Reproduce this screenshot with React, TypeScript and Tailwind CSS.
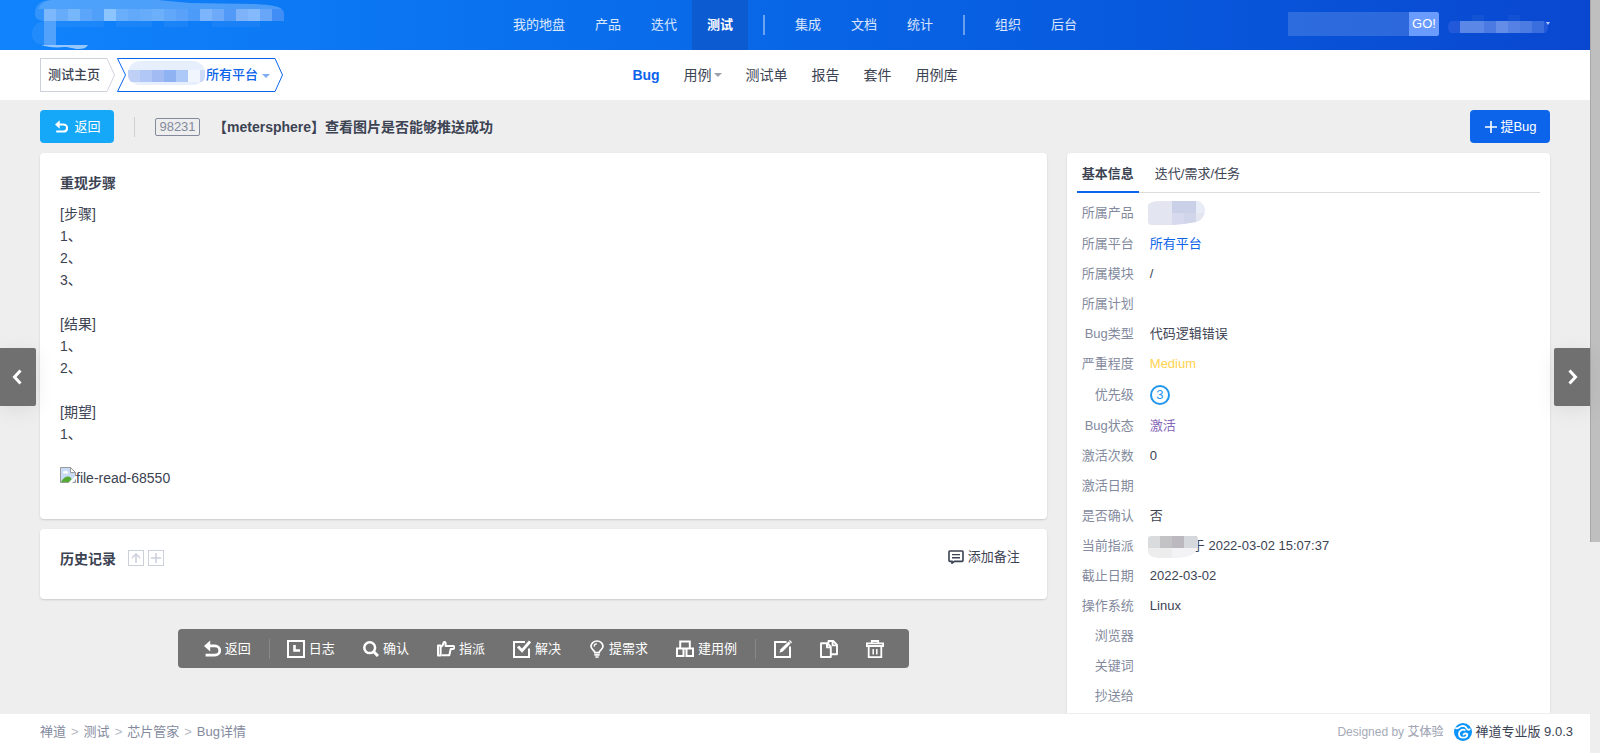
import React from "react";

type IconProps = { className?: string };

const primaryNav: string[][] = [
  ["我的地盘", "产品", "迭代", "测试"],
  ["集成", "文档", "统计"],
  ["组织", "后台"],
];

const subNav = ["Bug", "用例", "测试单", "报告", "套件", "用例库"];

const logoCells = [
  "#7db8fc", "#66acfb", "#76b7fc", "#5ba6fb", "#50a0fa", "#8cc5fd", "#68aefb", "#62a9fa", "#66acfa", "#6cb0fb",
  "#62a8fa", "#5aa2f9", "#4d9bf8", "#7cb5fb", "#6daaf9", "#519af7", "#7eb3fa", "#84b9fb", "#67a6f8", "#3f8df5",
];

const steps = ["[步骤]", "1、", "2、", "3、", "", "[结果]", "1、", "2、", "", "[期望]", "1、", ""];

function Caret({ className }: IconProps) {
  return (
    <svg viewBox="0 0 8 4" className={className} fill="currentColor" aria-hidden="true">
      <path d="M0 0h8L4 4z" />
    </svg>
  );
}

function BackIcon({ className }: IconProps) {
  return (
    <svg viewBox="0 0 16 16" className={className} fill="none" aria-hidden="true">
      <path d="M1.500 14.200h8.700c2.700 0 4.600-1.800 4.600-4.300s-1.900-4.300-4.600-4.300H4" stroke="currentColor" strokeWidth="2.600" />
      <path d="M0 5.600L5.800.4v10.400z" fill="currentColor" />
    </svg>
  );
}

function LogIcon({ className }: IconProps) {
  return (
    <svg viewBox="0 0 18 18" className={className} fill="none" stroke="currentColor" strokeWidth="2" aria-hidden="true">
      <path d="M1 1h16v16H1z" />
      <path d="M7.500 5v5.500H13" strokeWidth="2.600" />
    </svg>
  );
}

function SearchIcon({ className }: IconProps) {
  return (
    <svg viewBox="0 0 16 16" className={className} fill="none" stroke="currentColor" aria-hidden="true">
      <circle cx="6.700" cy="6.700" r="5.400" strokeWidth="2.500" />
      <path d="M10.500 10.500l4.500 4.500" strokeWidth="3" />
    </svg>
  );
}

function HandIcon({ className }: IconProps) {
  return (
    <svg viewBox="0 0 18 16" className={className} fill="none" stroke="currentColor" strokeWidth="2" strokeLinejoin="round" aria-hidden="true">
      <path d="M1 4.500h2.600v10H1z" />
      <path d="M4.500 14.200h7.800l1.400-6.200h2.600c1 0 1.300-3 0-3H8.600V2.200c0-1.400-2-1.500-2.200-.1C6.200 4 5.400 5 4 5.800" />
    </svg>
  );
}

function CheckIcon({ className }: IconProps) {
  return (
    <svg viewBox="0 0 18 18" className={className} fill="none" stroke="currentColor" strokeWidth="2" aria-hidden="true">
      <path d="M12 2H1v15h15V8.500" />
      <path d="M5 6.500l4 4.200L17 1.500" strokeWidth="2.800" />
    </svg>
  );
}

function BulbIcon({ className }: IconProps) {
  return (
    <svg viewBox="0 0 14 18" className={className} fill="none" stroke="currentColor" strokeWidth="1.700" strokeLinecap="round" aria-hidden="true">
      <path d="M4.800 12.600C4.600 10.400 1 9.500 1 6.200A6 5.200 0 0 1 13 6.200c0 3.300-3.600 4.200-3.800 6.400z" />
      <path d="M5 14.800h4M6 17h2" />
      <path d="M4.200 6.200c0-1.500 1-2.300 2.300-2.400" strokeWidth="1.200" />
    </svg>
  );
}

function CubesIcon({ className }: IconProps) {
  return (
    <svg viewBox="0 0 18 18" className={className} fill="none" stroke="currentColor" strokeWidth="2" aria-hidden="true">
      <path d="M4.200 8.500V1.500h9.600v7" />
      <path d="M1 8.500h6.500V16H1zM10.500 8.500H17V16h-6.500zM7.500 8.500h3" />
    </svg>
  );
}

function EditIcon({ className }: IconProps) {
  return (
    <svg viewBox="0 0 18 18" className={className} fill="none" stroke="currentColor" strokeWidth="2" aria-hidden="true">
      <path d="M12.500 2H1v15h15V6.500" />
      <path d="M5.500 12.800l1-3.600L14.600 1.600l2 2-7.800 8z" fill="currentColor" stroke="none" />
      <path d="M15.400.6L17.600 2.800" strokeWidth="1.400" />
    </svg>
  );
}

function CopyIcon({ className }: IconProps) {
  return (
    <svg viewBox="0 0 18 18" className={className} fill="none" stroke="currentColor" strokeWidth="1.900" strokeLinejoin="round" aria-hidden="true">
      <path d="M7.400 3.200H1V17h9.800V6.800z" />
      <path d="M7 3.600v3.800h3.600" />
      <path d="M8.500 3V1h4.700L17 4.800v9.400h-6" />
      <path d="M12.600 1.400v4h4" />
    </svg>
  );
}

function TrashIcon({ className }: IconProps) {
  return (
    <svg viewBox="0 0 18 18" className={className} fill="none" stroke="currentColor" strokeWidth="1.800" aria-hidden="true">
      <path d="M.9 6V3.400h16.200V6z" />
      <path d="M5.800 3.200V1h6.400v2.200" />
      <path d="M2.700 6v11.100h12.600V6" />
      <path d="M7.200 9v5.500M10.800 9v5.500" strokeWidth="1.500" />
    </svg>
  );
}

function CommentIcon({ className }: IconProps) {
  return (
    <svg viewBox="0 0 16 14" className={className} fill="none" stroke="currentColor" strokeWidth="1.600" aria-hidden="true">
      <path d="M1.800 1h12.400q.8 0 .8.800v8.800q0 .8-.8.800H6.500L4 13.200v-1.800H1.800q-.8 0-.8-.8V1.800Q1 1 1.800 1z" />
      <path d="M4 4.600h8M4 7.700h8" strokeWidth="1.400" />
    </svg>
  );
}

function BrokenImage({ className }: IconProps) {
  return (
    <svg viewBox="0 0 16 16" className={className} aria-hidden="true">
      <path d="M.5.5h10l5 5v10H.5z" fill="#c9dcf7" stroke="#9a9a9a" />
      <path d="M10.500.5v5h5z" fill="#fff" stroke="#9a9a9a" />
      <path d="M3 5.500c0-1 1-1.500 1.800-1 .5-1.200 2.400-1 2.500.4 1 0 1.200 1.100.5 1.600H3.500z" fill="#fff" />
      <path d="M1 15c1.500-3.500 4.500-5.500 7-5.500 2 0 3.500 1.500 3.500 3L9 15z" fill="#56ab35" />
      <path d="M8.500 16L16 8.500V12l-4 4z" fill="#fff" />
    </svg>
  );
}

function Brand() {
  return (
    <svg viewBox="0 0 260 50" className="h-[50px] w-[260px]" role="img" aria-label="logo">
      <defs>
        <clipPath id="brand-outline">
          <path d="M10 6C12 2 16 0 22 0H128L160 3L225 4C240 5 254 6 254 14V21H14V9C8 14 4 18 6 21z" />
        </clipPath>
      </defs>
      <path d="M5 14C5 3 12 0 22 0H128L160 3 225 4C242 5 254 6 254 14V21H12C8 20 5 18 5 14z" fill="#fff" fillOpacity=".14" />
      <path d="M8 9C11 3 16 0 22 0H128L160 3 225 4C240 5 248 6 252 9z" fill="#fff" fillOpacity=".14" />
      <path d="M14 21C5 23 2 28 2 34s3 10 12 11z" fill="#fff" fillOpacity=".08" />
      <g clipPath="url(#brand-outline)">
        {logoCells.map((fill, i) => (
          <rect key={i} x={14 + i * 12} y="9" width="12" height="12" fill={fill} />
        ))}
      </g>
      <path d="M26 21h48v6H26zM86 21h36v6H86zM134 21h24v6h-24zM182 21h48v6h-48z" fill="#fff" fillOpacity=".05" />
      <path d="M14 21h12v24H14z" fill="#52a2fb" />
      <path d="M11 45h47c-2 3-5 4-9 4-6 0-9-2-15-2-8 1-17 0-23-2z" fill="#93c7fd" />
    </svg>
  );
}

function UserMask() {
  return (
    <svg viewBox="0 0 104 26" className="mt-1.5 h-[26px] w-[104px]" role="img" aria-label="user">
      <path d="M3 7C1 8 0 10 0 13s1 5 3 6h94c2-1 3-3 3-6s-1-5-3-6z" fill="#2159da" />
      <path d="M12 7h24v12H12z" fill="#5b87e6" />
      <path d="M36 7h12v12H36z" fill="#4a7ae2" />
      <path d="M48 7h12v12H48z" fill="#648de7" />
      <path d="M60 7h12v12H60z" fill="#5581e4" />
      <path d="M72 7h12v12H72z" fill="#4c7be2" />
      <path d="M84 7h12v12H84z" fill="#3a6ddd" />
      <path d="M24 1h12v6H24zM60 1h12v6H60z" fill="#fff" fillOpacity=".04" />
      <path d="M98 8h4l-2 3z" fill="#b5c9f5" />
    </svg>
  );
}

function ProductMask() {
  return (
    <svg viewBox="0 0 78 24" className="mb-1 h-6 w-[78px]" role="img" aria-label="product">
      <rect width="77" height="24" rx="12" fill="#e8effc" />
      <path d="M0 9h12v12H3Q0 18 0 15z" fill="#bfd0f7" />
      <path d="M12 9h12v12H12z" fill="#b1c7f6" />
      <path d="M24 9h12v12H24z" fill="#a2bcf3" />
      <path d="M36 9h12v12H36z" fill="#8fb2f2" />
      <path d="M48 9h12v12H48z" fill="#adc9f7" />
      <path d="M60 9h12v12H60z" fill="#f0f5fe" />
      <path d="M72 9h5v6q0 4-3 6h-2z" fill="#cfdcf9" />
    </svg>
  );
}

function FieldMask() {
  return (
    <svg viewBox="0 0 57 26" className="h-[26px] w-[57px]" role="img" aria-label="product">
      <path d="M0 5Q3 1 12 1H50Q57 4 57 11 56 20 48 22L26 25H4Q0 25 0 21z" fill="#e3e5f1" />
      <path d="M24 1h24v12H24z" fill="#c9d0e8" />
      <path d="M24 13h12v11l-12 1z" fill="#d7daee" />
      <path d="M36 13h12v9l-12 2z" fill="#d0d5ea" />
      <path d="M48 1h2Q57 4 57 11v2h-9z" fill="#e8ecf7" />
    </svg>
  );
}

function AssigneeMask() {
  return (
    <svg viewBox="0 0 50 24" className="mt-0.5 h-6 w-[50px]" role="img" aria-label="assignee">
      <path d="M3 1h44q3 0 3 3v9H0V4q0-3 3-3z" fill="#dadbdd" />
      <path d="M12 1h12v12H12z" fill="#c3c2c5" />
      <path d="M24 1h12v12H24z" fill="#bcb8c0" />
      <path d="M36 1h13v12H36z" fill="#d5d9de" />
      <path d="M0 13h24v10H10Q0 22 0 16z" fill="#ededee" />
      <path d="M24 13h25q-1 6-8 8-6 2-17 2z" fill="#f3f3f6" />
    </svg>
  );
}

function ZenLogo({ className }: IconProps) {
  return (
    <svg viewBox="0 0 18 18" className={className} fill="none" stroke="#fff" strokeLinecap="round" aria-hidden="true">
      <circle cx="9" cy="9" r="9" fill="#0a94fb" stroke="none" />
      <path d="M2 5.200C4.400 6 5.600 3 8.600 2.900c2.200 0 3.400 1.100 4.300 2.700.6 1.100 1.800 1.300 2.900.7" strokeWidth="1.800" />
      <path d="M10.800 7C7.800 6 5 7.800 5 10.700c0 2.500 1.900 4 4.300 4 2.300 0 4-1.500 4-3.500-1.200-.8-3-.7-3.800.3" strokeWidth="1.800" />
    </svg>
  );
}

type Row = { label: string; value?: React.ReactNode; height?: string };

const rows: Row[] = [
  { label: "所属产品", value: <span className="-ml-0.5 block"><FieldMask /></span>, height: "h-8" },
  { label: "所属平台", value: <a href="#platform" className="text-[#0c64eb]">所有平台</a> },
  { label: "所属模块", value: "/" },
  { label: "所属计划" },
  { label: "Bug类型", value: "代码逻辑错误" },
  { label: "严重程度", value: <span className="text-[#ffd24d]">Medium</span> },
  {
    label: "优先级",
    value: (
      <span className="flex size-5 items-center justify-center rounded-full border-2 border-[#1f97ee] text-[#1f97ee]">3</span>
    ),
    height: "h-8",
  },
  { label: "Bug状态", value: <span className="text-[#8666b8]">激活</span> },
  { label: "激活次数", value: "0" },
  { label: "激活日期" },
  { label: "是否确认", value: "否" },
  {
    label: "当前指派",
    value: (
      <span className="-ml-0.5 flex items-center whitespace-pre">
        <span className="z-10"><AssigneeMask /></span>
        <span className="-ml-1.5">于 2022-03-02 15:07:37</span>
      </span>
    ),
  },
  { label: "截止日期", value: "2022-03-02" },
  { label: "操作系统", value: "Linux" },
  { label: "浏览器" },
  { label: "关键词" },
  { label: "抄送给" },
];

const actions = [
  { label: "日志", icon: <LogIcon className="size-[18px]" /> },
  { label: "确认", icon: <SearchIcon className="size-4" /> },
  { label: "指派", icon: <HandIcon className="h-4 w-[18px]" /> },
  { label: "解决", icon: <CheckIcon className="size-[18px]" /> },
  { label: "提需求", icon: <BulbIcon className="h-[18px] w-4" /> },
  { label: "建用例", icon: <CubesIcon className="size-[18px]" /> },
];

const iconActions = [
  { label: "编辑", icon: <EditIcon className="size-[18px]" /> },
  { label: "复制", icon: <CopyIcon className="size-[18px]" /> },
  { label: "删除", icon: <TrashIcon className="size-[18px]" /> },
];

function Header() {
  return (
    <header className="grid h-[50px] grid-cols-[1fr_auto_1fr] bg-linear-to-r from-[#1184fc] to-[#0a47d0] text-[13px]">
      <div className="pl-[30px]">
        <Brand />
      </div>
      <nav className="flex items-center">
        {primaryNav.map((group, g) => (
          <React.Fragment key={g}>
            {g > 0 && <span className="mx-[15px] h-5 w-0.5 bg-white/40" />}
            {group.map((item) => (
              <a
                key={item}
                href="#nav"
                className={
                  item === "测试"
                    ? "flex h-[50px] items-center bg-[#0d5bd0] px-[15px] font-bold text-white"
                    : "flex h-[50px] items-center px-[15px] text-white/85"
                }
              >
                {item}
              </a>
            ))}
          </React.Fragment>
        ))}
      </nav>
      <div className="flex h-12 items-center justify-end pr-[38px]">
        <input aria-label="搜索" className="h-6 w-[121px] bg-white/15 px-2 text-white outline-none" />
        <button className="mr-[9px] h-6 w-[30px] rounded-r-xs bg-[#6a9bff] text-[13px] font-medium text-white">GO!</button>
        <UserMask />
      </div>
    </header>
  );
}

function Breadcrumb() {
  return (
    <div className="flex items-center pl-10 text-[13px] font-medium">
      <a href="#home" className="flex h-[34px] items-center text-[#3c4353]">
        <span className="flex h-full items-center border-y border-l border-[#cbd0db] pr-[7px] pl-[7px]">测试主页</span>
        <svg viewBox="0 0 8 34" className="h-full w-2" fill="none" stroke="#d0d4de" aria-hidden="true">
          <path d="M0 .5L7.500 17 0 33.500" />
        </svg>
      </a>
      <a href="#product" className="ml-0.5 flex h-[34px] items-center text-[#0c64eb]">
        <svg viewBox="0 0 9 34" className="h-full w-[9px]" fill="none" stroke="#0c64eb" aria-hidden="true">
          <path d="M9 .5H.5L8.500 17 .5 33.500H9" />
        </svg>
        <span className="flex h-full items-center border-y border-[#0c64eb] pr-[5px] pl-0.5">
          <ProductMask />
          所有平台
          <Caret className="mt-0.5 ml-1 h-1 w-2 text-[#7fadf5]" />
        </span>
        <svg viewBox="0 0 8 34" className="h-full w-2" fill="none" stroke="#0c64eb" aria-hidden="true">
          <path d="M0 .5L7.500 17 0 33.500" />
        </svg>
      </a>
    </div>
  );
}

export default function App() {
  return (
    <div className="flex min-h-screen bg-[#eee] font-['Liberation_Sans','Noto_Sans_CJK_SC',sans-serif] text-[13px] text-[#3c4353]">
      <div className="relative flex min-w-0 grow flex-col">
        <Header />

        <div className="grid h-[50px] grid-cols-[1fr_auto_1fr] bg-white">
          <Breadcrumb />
          <nav className="flex items-center gap-6 text-sm">
            {subNav.map((item) => (
              <a
                key={item}
                href="#sub"
                className={item === "Bug" ? "font-bold text-[#0c64eb]" : "flex items-center text-[#3c4353]"}
              >
                {item}
                {item === "用例" && <Caret className="ml-0.5 h-1 w-2 text-[#9aa0ac]" />}
              </a>
            ))}
          </nav>
          <div />
        </div>

        <main className="flex grow flex-col px-10 pt-2.5">
          <div className="flex items-center">
            <button className="flex h-[33px] w-[74px] items-center justify-center gap-1.5 rounded-sm bg-[#16a8f8] pl-0.5 text-white">
              <BackIcon className="size-[13px]" />
              返回
            </button>
            <span className="ml-5 h-5 w-px bg-[#cfcfcf]" />
            <span className="ml-5 flex h-[18px] w-[45px] items-center justify-center rounded-xs border border-[#838a9d] text-[#838a9d]">
              98231
            </span>
            <h1 className="ml-[13px] text-sm font-bold">【metersphere】查看图片是否能够推送成功</h1>
            <button className="ml-auto flex h-[33px] w-20 items-center justify-center gap-[3px] rounded-sm bg-[#0c64eb] pl-0.5 text-white">
              <svg viewBox="0 0 12 12" className="size-3" stroke="currentColor" strokeWidth="1.600" aria-hidden="true">
                <path d="M0 6h12M6 0v12" />
              </svg>
              提Bug
            </button>
          </div>

          <div className="mt-2.5 flex grow gap-5">
            <div className="flex min-w-0 grow flex-col">
              <section className="rounded-sm bg-white px-5 pt-5 pb-[30px] text-sm shadow-[0_1px_2px_rgba(0,0,0,0.15)]">
                <h2 className="leading-5 font-bold">重现步骤</h2>
                <div className="mt-2.5 leading-[22px]">
                  {steps.map((line, i) => (
                    <p key={i} className="h-[22px]">{line}</p>
                  ))}
                  <p className="flex h-[22px]">
                    <BrokenImage className="size-4" />
                    file-read-68550
                  </p>
                </div>
              </section>

              <section className="mt-2.5 flex h-[70px] items-start rounded-sm bg-white px-5 pt-5 shadow-[0_1px_2px_rgba(0,0,0,0.15)]">
                <h2 className="text-sm leading-5 font-bold">历史记录</h2>
                <div className="mt-px ml-3 flex gap-1 text-[#cbd0db]">
                  <button aria-label="排序" className="flex size-4 items-center justify-center border border-current">
                    <svg viewBox="0 0 10 10" className="size-2.5" fill="none" stroke="currentColor" strokeWidth="1.500">
                      <path d="M5 10V1M1 5l4-4 4 4" />
                    </svg>
                  </button>
                  <button aria-label="展开" className="flex size-4 items-center justify-center border border-current">
                    <svg viewBox="0 0 10 10" className="size-2.5" stroke="currentColor" strokeWidth="1.500">
                      <path d="M0 5h10M5 0v10" />
                    </svg>
                  </button>
                </div>
                <button className="mr-[7px] ml-auto flex h-4 items-center gap-1">
                  <CommentIcon className="h-[14px] w-4" />
                  添加备注
                </button>
              </section>

              <div className="mt-[30px] flex h-[39px] items-center self-center rounded-sm bg-[#727272] px-[11px] text-white">
                <button className="flex items-center gap-1 px-[15px]">
                  <BackIcon className="size-[17px]" />
                  返回
                </button>
                <span className="mx-[3px] h-5 w-px bg-white/15" />
                {actions.map((a) => (
                  <button key={a.label} className="flex items-center gap-1 px-[14px]">
                    {a.icon}
                    {a.label}
                  </button>
                ))}
                <span className="mx-1 h-5 w-px bg-white/15" />
                {iconActions.map((a) => (
                  <button key={a.label} aria-label={a.label} className="px-[14px]">
                    {a.icon}
                  </button>
                ))}
              </div>
            </div>

            <aside className="w-[32%] shrink-0 rounded-t-sm bg-white px-2.5 shadow-[0_1px_2px_rgba(0,0,0,0.15)]">
              <div role="tablist" className="flex h-10 gap-[11px] border-b border-[#dcdcdc]">
                <button role="tab" aria-selected="true" className="-mb-px h-10 border-b-2 border-[#0c64eb] px-[5px] pt-1 font-bold">
                  基本信息
                </button>
                <button role="tab" aria-selected="false" className="px-[5px] pt-[3px]">
                  迭代/需求/任务
                </button>
              </div>
              <table className="mt-1 w-full">
                <tbody>
                  {rows.map((r) => (
                    <tr key={r.label} className={r.height ?? "h-[30px]"}>
                      <th className="w-[57px] text-right font-normal whitespace-nowrap text-[#838a9d]">{r.label}</th>
                      <td className="pl-4">{r.value}</td>
                    </tr>
                  ))}
                </tbody>
              </table>
            </aside>
          </div>
        </main>

        <footer className="relative flex h-10 items-center justify-between border-t border-[#eee] bg-white pr-[17px] pb-[3px] pl-10 text-[#838a9d]">
          <nav className="flex gap-[5px]">
            <a href="#f1">禅道</a>
            <span className="text-[#b5b9c4]">&gt;</span>
            <a href="#f2">测试</a>
            <span className="text-[#b5b9c4]">&gt;</span>
            <a href="#f3">芯片管家</a>
            <span className="text-[#b5b9c4]">&gt;</span>
            <a href="#f4">Bug详情</a>
          </nav>
          <div className="flex items-center">
            <span className="text-xs text-[#a6aab8]">
              Designed by <a href="#author" className="font-medium">艾体验</a>
            </span>
            <ZenLogo className="ml-[11px] size-[18px]" />
            <a href="#version" className="ml-[3px] text-[#3c4353]">禅道专业版 9.0.3</a>
          </div>
        </footer>

        <a
          href="#prev"
          aria-label="上一个"
          className="absolute top-[348px] left-0 flex h-[58px] w-9 items-center justify-center rounded-r-xs bg-[#707070] pr-0.5 text-white shadow-[0_4px_20px_rgba(0,0,0,0.08)]"
        >
          <svg viewBox="0 0 10 16" className="h-4 w-2.5" fill="none" stroke="currentColor" strokeWidth="3" aria-hidden="true">
            <path d="M8.500 1.500L2.500 8l6 6.500" />
          </svg>
        </a>
        <a
          href="#next"
          aria-label="下一个"
          className="absolute top-[348px] right-0 flex h-[58px] w-9 items-center justify-center rounded-l-xs bg-[#707070] pl-0.5 text-white shadow-[0_4px_20px_rgba(0,0,0,0.08)]"
        >
          <svg viewBox="0 0 10 16" className="h-4 w-2.5" fill="none" stroke="currentColor" strokeWidth="3" aria-hidden="true">
            <path d="M1.500 1.500L7.500 8l-6 6.500" />
          </svg>
        </a>
      </div>

      <div className="w-2.5 shrink-0 bg-[#eee]" aria-hidden="true">
        <div className="h-[542px] border-l border-[#a8a8a8] bg-[#bfbfbf]" />
      </div>
    </div>
  );
}
